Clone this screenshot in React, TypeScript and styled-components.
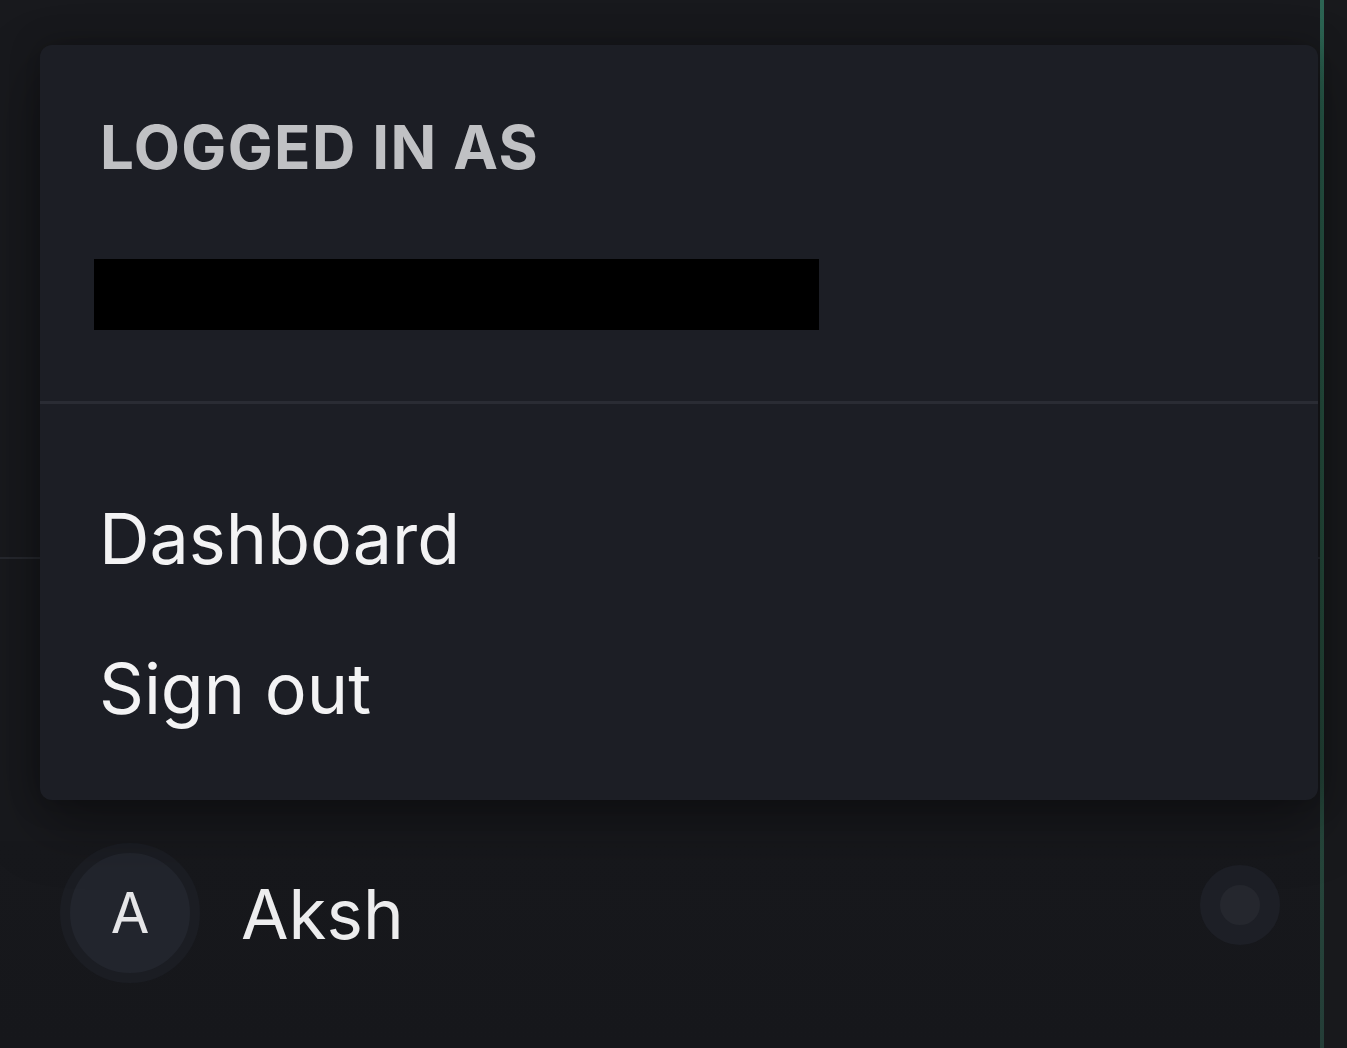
import React from "react";
import styled, { createGlobalStyle } from "styled-components";

const Global = createGlobalStyle`
  html, body { margin: 0; padding: 0; background: #17181c; }
  body { font-family: Inter, "Noto Sans", sans-serif; -webkit-font-smoothing: antialiased; }
  #root { height: 100vh; }
`;

const Shell = styled.div`
  display: flex;
  height: 1048px;
  overflow: hidden;
`;

const Sidebar = styled.aside`
  position: relative;
  width: 1320px;
  flex: none;
  display: flex;
  flex-direction: column;
  background: #18191d;
  border-right: 4px solid #2a5b4c;
  border-image: linear-gradient(180deg, #2c6453 0%, #28503f 55%, #243d37 100%) 1;
`;

const TopSection = styled.div`
  height: 557px;
  border-bottom: 2px solid #26282e;
  flex: none;
`;

const Spacer = styled.div`
  flex: 1;
`;

const UserRow = styled.div`
  display: flex;
  align-items: center;
  padding: 0 40px 63px 60px;
  height: 144px;
  background: linear-gradient(180deg, #17181c, #16171b);
`;

const Avatar = styled.div`
  width: 120px;
  height: 120px;
  border-radius: 50%;
  background: #22252d;
  border: 10px solid #1b1d23;
  display: flex;
  align-items: center;
  justify-content: center;
  color: #e6e6e8;
  font-size: 56px;
  line-height: 1;
  flex: none;
`;

const UserName = styled.span`
  margin-left: 41px;
  font-size: 69px;
  line-height: 1;
  color: #ededee;
  flex: 1;
  padding-top: 2px;
`;

const StatusDot = styled.div`
  width: 40px;
  height: 40px;
  border-radius: 50%;
  background: #25272e;
  border: 20px solid #1d1f26;
  margin-bottom: 16px;
  flex: none;
`;

const Menu = styled.div`
  position: absolute;
  left: 40px;
  top: 45px;
  width: 1278px;
  height: 755px;
  background: #1c1e25;
  border-radius: 12px;
  box-shadow: 0 24px 60px rgba(0, 0, 0, 0.35), 0 0 30px rgba(0, 0, 0, 0.25);
  display: flex;
  flex-direction: column;
`;

const MenuHeader = styled.div`
  padding: 72px 0 0 54px;
  height: 284px;
  border-bottom: 3px solid #2a2c34;
`;

const Label = styled.div`
  padding-left: 6px;
  font-size: 60px;
  line-height: 1;
  font-weight: 700;
  letter-spacing: 1.4px;
  color: #c0c1c4;
`;

const Redacted = styled.div`
  margin-top: 82px;
  width: 725px;
  height: 71px;
  background: #000;
`;

const MenuList = styled.div`
  padding: 60px 0 0 59px;
  display: flex;
  flex-direction: column;
`;

const MenuItem = styled.div`
  font-size: 70px;
  line-height: 150px;
  color: #f3f3f4;
`;

const Main = styled.main`
  flex: 1;
  background: #18191c;
`;

export default function App() {
  return (
    <>
      <Global />
      <Shell>
        <Sidebar>
          <TopSection />
          <Spacer />
          <UserRow>
            <Avatar>A</Avatar>
            <UserName>Aksh</UserName>
            <StatusDot />
          </UserRow>
          <Menu>
            <MenuHeader>
              <Label>LOGGED IN AS</Label>
              <Redacted />
            </MenuHeader>
            <MenuList>
              <MenuItem>Dashboard</MenuItem>
              <MenuItem>Sign out</MenuItem>
            </MenuList>
          </Menu>
        </Sidebar>
        <Main />
      </Shell>
    </>
  );
}
